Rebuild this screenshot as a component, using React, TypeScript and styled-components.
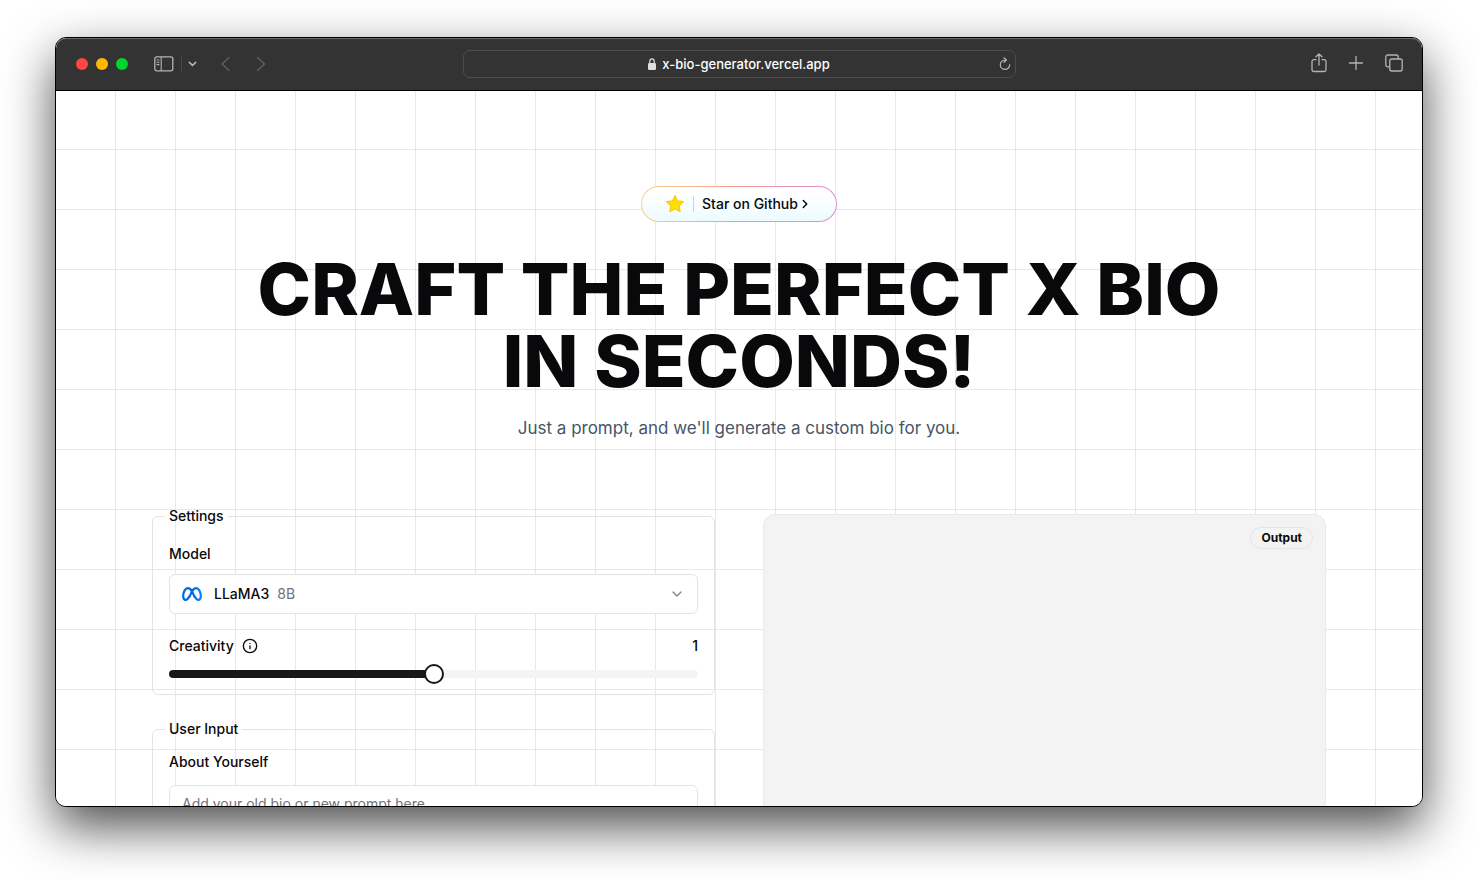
import React, { useState } from "react";
import styled, { createGlobalStyle } from "styled-components";
import { ChevronDown, ChevronRight, Info } from "lucide-react";

const GlobalStyle = createGlobalStyle`
  *, *::before, *::after { box-sizing: border-box; }
  body {
    margin: 0;
    background: #ffffff;
    color: #09090b;
    font-family: Inter, "Liberation Sans", sans-serif;
    font-size: 14px;
    line-height: 20px;
  }
  button, input, select, textarea { font: inherit; color: inherit; margin: 0; }
`;

const Desktop = styled.div`
  display: flex;
  height: 100vh;
  padding: 37px 55px 73px;
  overflow: hidden;
`;

const BrowserWindow = styled.div`
  flex: 1;
  min-width: 0;
  display: flex;
  flex-direction: column;
  overflow: hidden;
  border: 1px solid #000000;
  border-radius: 11px;
  background: #ffffff;
  box-shadow: 0 20px 50px rgba(0, 0, 0, 0.7);
`;

const TitleBar = styled.header`
  flex: none;
  display: grid;
  grid-template-columns: 1fr minmax(0, 553px) 1fr;
  align-items: center;
  height: 53px;
  padding: 0 18px;
  border-bottom: 1px solid #000000;
  border-radius: 10px 10px 0 0;
  background: #333333;
  box-shadow: inset 0 1px 0 #6a6a6a;
`;

const BarGroup = styled.div<{ $end?: boolean }>`
  display: flex;
  align-items: center;
  justify-content: ${(p) => (p.$end ? "flex-end" : "flex-start")};
  gap: ${(p) => (p.$end ? "18px" : "0")};
  padding-bottom: ${(p) => (p.$end ? "2px" : "0")};
`;

const Lights = styled.div`
  display: flex;
  gap: 8px;
  margin: 0 26px 0 2px;
`;

const Light = styled.button<{ $color: string }>`
  width: 12px;
  height: 12px;
  padding: 0;
  border: 0;
  border-radius: 50%;
  background: ${(p) => p.$color};
`;

const BarButton = styled.button<{ $dim?: boolean }>`
  display: flex;
  padding: 0;
  border: 0;
  background: none;
  color: ${(p) => (p.$dim ? "#5f5f5f" : "#b4b4b4")};
`;

const BarDivider = styled.span`
  width: 1px;
  height: 18px;
  margin: 0 6px 0 7px;
  background: #484848;
`;

const HistoryButtons = styled.div`
  display: flex;
  gap: 16px;
  margin-left: 18px;
`;

const AddressBar = styled.div`
  display: grid;
  grid-template-columns: 14px 1fr 14px;
  align-items: center;
  height: 28px;
  padding: 0 2px;
  border: 1px solid #4d4d4d;
  border-radius: 7px;
  color: #ffffff;
`;

const Address = styled.div`
  grid-column: 2;
  display: flex;
  justify-content: center;
  align-items: center;
  gap: 6px;
  font-size: 13px;
  font-weight: 500;
`;

const Page = styled.main`
  flex: 1;
  min-height: 0;
  overflow: hidden;
  padding: 95px 96px 0;
  background-color: #ffffff;
  background-image: linear-gradient(to right, transparent 59px, #e8e8ea 59px),
    linear-gradient(to bottom, transparent 59px, #e8e8ea 59px);
  background-size: 60px 60px;
  background-position: 0 -1px;
`;

const Hero = styled.section`
  display: flex;
  flex-direction: column;
  align-items: center;
  text-align: center;
`;

const StarLink = styled.a`
  display: flex;
  align-items: center;
  height: 36px;
  padding: 0 24px 0 23px;
  border: 1px solid transparent;
  border-radius: 18px;
  background: linear-gradient(to bottom, #ffffff 20%, #ecfbff) padding-box,
    linear-gradient(to right, #fbd38b, #efa08f 45%, #dd8fd3) border-box;
  color: #09090b;
  font-weight: 500;
  text-decoration: none;
`;

const StarDivider = styled.span`
  width: 1px;
  height: 16px;
  margin: 0 8px;
  background: #d1d5db;
`;

const Title = styled.h1`
  max-width: 1024px;
  margin: 31px 0 0;
  font-size: 72px;
  font-weight: 800;
  line-height: 72px;
  text-transform: uppercase;
`;

const Subtitle = styled.p`
  margin: 17px 0 0;
  color: #475569;
  font-size: 17px;
  line-height: 28px;
`;

const Columns = styled.div`
  display: grid;
  grid-template-columns: 1fr 1fr;
  gap: 48px;
  margin-top: 64px;
`;

const SettingsForm = styled.form`
  display: flex;
  flex-direction: column;
  gap: 24px;
  min-width: 0;
`;

const Group = styled.fieldset<{ $top: number }>`
  min-width: 0;
  margin: 0;
  padding: ${(p) => p.$top}px 16px 10px;
  border: 1px solid #e4e4e7;
  border-radius: 6px;
`;

const Legend = styled.legend`
  margin-left: -4px;
  padding: 0 4px;
  font-weight: 500;
`;

const FieldLabel = styled.label`
  display: block;
  font-weight: 500;
  line-height: 24px;
`;

const SelectFrame = styled.div`
  display: flex;
  align-items: center;
  height: 40px;
  margin: 8px 0 20px;
  padding: 0 12px;
  border: 1px solid #e4e4e7;
  border-radius: 6px;
  background: #ffffff;
`;

const ModelSelect = styled.select`
  appearance: none;
  field-sizing: content;
  margin-left: 12px;
  padding: 0;
  border: 0;
  background: none;
  font-weight: 500;
  outline: none;
`;

const ModelSize = styled.span`
  flex: 1;
  margin-left: 8px;
  color: #71717a;
`;

const SliderHead = styled.div`
  display: flex;
  align-items: center;
  gap: 8px;
`;

const SliderValue = styled.output`
  margin-left: auto;
  font-weight: 500;
`;

const Slider = styled.input`
  appearance: none;
  display: block;
  width: 100%;
  height: 20px;
  margin-top: 6px;
  background: none;
  outline: none;

  &::-webkit-slider-runnable-track {
    height: 8px;
    border-radius: 4px;
    background: linear-gradient(to right, #18181b var(--fill), #f4f4f5 var(--fill));
  }

  &::-webkit-slider-thumb {
    appearance: none;
    width: 20px;
    height: 20px;
    margin-top: -6px;
    border: 2px solid #18181b;
    border-radius: 50%;
    background: #ffffff;
  }
`;

const Prompt = styled.textarea`
  display: block;
  width: 100%;
  min-height: 100px;
  margin-top: 11px;
  padding: 8px 12px;
  border: 1px solid #e4e4e7;
  border-radius: 6px;
  background: #ffffff;
  resize: none;

  &::placeholder { color: #71717a; }
`;

const OutputPanel = styled.section`
  display: flex;
  justify-content: flex-end;
  align-items: flex-start;
  min-height: 480px;
  margin-top: 8px;
  padding: 12px;
  border: 1px solid #eaeaec;
  border-radius: 12px;
  background: #f3f3f3;
`;

const OutputTag = styled.h2`
  margin: 0;
  padding: 0 10px;
  border: 1px solid #e4e4e7;
  border-radius: 11px;
  font-size: 12px;
  font-weight: 700;
  line-height: 20px;
`;

const stroke = {
  fill: "none",
  stroke: "currentColor",
  strokeLinecap: "round" as const,
  strokeLinejoin: "round" as const,
};

const SidebarIcon = () => (
  <svg width="20" height="16" viewBox="0 0 20 16" {...stroke} strokeWidth="1.3">
    <rect x="0.8" y="0.8" width="18" height="14" rx="2" />
    <path d="M7.2 1v13.6M3 4h2M3 6.3h2M3 8.6h2" strokeWidth="1.1" />
  </svg>
);

const MenuChevron = () => (
  <svg width="9" height="6" viewBox="0 0 9 6" {...stroke} strokeWidth="1.6">
    <path d="M1.3 1.4 4.5 4.4 7.7 1.4" />
  </svg>
);

const BackIcon = () => (
  <svg width="20" height="16" viewBox="0 0 20 16" {...stroke} strokeWidth="1.5">
    <path d="M14 1.500 7 8l7 6.500" />
  </svg>
);

const ForwardIcon = () => (
  <svg width="20" height="16" viewBox="0 0 20 16" {...stroke} strokeWidth="1.5">
    <path d="m6.500 1.500 7 6.500-7 6.500" />
  </svg>
);

const LockIcon = () => (
  <svg width="8" height="12" viewBox="0 0 8 12">
    <rect x="0" y="5" width="8" height="7" rx="1.2" fill="#dedede" />
    <path d="M1.8 5.5V3.2a2.2 2.4 0 0 1 4.4 0v2.3" fill="none" stroke="#dedede" strokeWidth="1.2" />
  </svg>
);

const ReloadIcon = () => (
  <svg width="12" height="14" viewBox="0 0 12 14" {...stroke} strokeWidth="1.2">
    <path d="M6.5 3H6a4.7 4.7 0 1 0 4.7 4.7M5 .8 7.4 3 5 5.3" />
  </svg>
);

const ShareIcon = () => (
  <svg width="20" height="20" viewBox="0 0 20 20" {...stroke} strokeWidth="1.3">
    <path d="M8 6.600H5.800A1.800 1.800 0 0 0 4 8.400v8.300a1.800 1.800 0 0 0 1.800 1.800h10.400a1.800 1.800 0 0 0 1.800-1.800V8.400a1.800 1.800 0 0 0-1.800-1.800H14M11 12V1M8 3.800 11 .9l3 2.900" />
  </svg>
);

const PlusIcon = () => (
  <svg width="20" height="20" viewBox="0 0 20 20" {...stroke} strokeWidth="1.3">
    <path d="M10 3.500v13M3.500 10h13" />
  </svg>
);

const TabsIcon = () => (
  <svg width="20" height="20" viewBox="0 0 20 20" {...stroke} strokeWidth="1.3">
    <rect x="5.800" y="6" width="12.400" height="12" rx="2" />
    <path d="M5.600 13.800H3.800a2 2 0 0 1-2-2V4a2 2 0 0 1 2-2h8.400a2 2 0 0 1 2 2v1.800" />
  </svg>
);

const StarIcon = () => (
  <svg width="20" height="20" viewBox="0 0 20 20">
    <path
      d="M10 1.700 12.500 7l5.800.7-4.300 4 1.100 5.800L10 14.700l-5.100 2.800L6 11.700l-4.300-4L7.500 7z"
      fill="#fde000"
      stroke="#fccb0b"
      strokeWidth="1.300"
      strokeLinejoin="round"
    />
  </svg>
);

const MetaIcon = () => (
  <svg width="20" height="14" viewBox="0 0 20 14" fill="none" strokeWidth="2.200" strokeLinecap="round" strokeLinejoin="round">
    <defs>
      <linearGradient id="meta-blue" x1="0" x2="1">
        <stop offset="0" stopColor="#0668e1" />
        <stop offset="0.5" stopColor="#0064e0" />
        <stop offset="1" stopColor="#0a82fb" />
      </linearGradient>
    </defs>
    <path
      d="M10 4.300C8.700 2.100 7.500 1.200 5.900 1.200 3.200 1.200 1.200 5 1.200 9.200c0 2.300 1 3.600 2.500 3.600 1.600 0 2.600-1.200 4.300-4.200L10 4.300c1.300-2.100 2.500-3.100 4.100-3.100 2.700 0 4.700 3.800 4.700 8 0 2.300-1 3.600-2.500 3.600-1.600 0-2.600-1.200-4.300-4.200z"
      stroke="url(#meta-blue)"
    />
  </svg>
);

export default function App() {
  const [creativity, setCreativity] = useState(1);

  return (
    <>
      <GlobalStyle />
      <Desktop>
        <BrowserWindow>
          <TitleBar>
            <BarGroup>
              <Lights>
                <Light $color="#ff4642" aria-label="Close" />
                <Light $color="#ffb900" aria-label="Minimize" />
                <Light $color="#00d52c" aria-label="Zoom" />
              </Lights>
              <BarButton aria-label="Sidebar"><SidebarIcon /></BarButton>
              <BarDivider />
              <BarButton aria-label="Tab groups"><MenuChevron /></BarButton>
              <HistoryButtons>
                <BarButton $dim aria-label="Back"><BackIcon /></BarButton>
                <BarButton $dim aria-label="Forward"><ForwardIcon /></BarButton>
              </HistoryButtons>
            </BarGroup>
            <AddressBar>
              <Address>
                <LockIcon />
                x-bio-generator.vercel.app
              </Address>
              <BarButton aria-label="Reload"><ReloadIcon /></BarButton>
            </AddressBar>
            <BarGroup $end>
              <BarButton aria-label="Share"><ShareIcon /></BarButton>
              <BarButton aria-label="New tab"><PlusIcon /></BarButton>
              <BarButton aria-label="Tab overview"><TabsIcon /></BarButton>
            </BarGroup>
          </TitleBar>

          <Page>
            <Hero>
              <StarLink href="#github">
                <StarIcon />
                <StarDivider />
                Star on Github
                <ChevronRight size={14} strokeWidth={2.5} />
              </StarLink>
              <Title>Craft the perfect X bio in seconds!</Title>
              <Subtitle>Just a prompt, and we'll generate a custom bio for you.</Subtitle>
            </Hero>

            <Columns>
              <SettingsForm>
                <Group $top={16}>
                  <Legend>Settings</Legend>
                  <FieldLabel htmlFor="model">Model</FieldLabel>
                  <SelectFrame>
                    <MetaIcon />
                    <ModelSelect id="model" defaultValue="llama3">
                      <option value="llama3">LLaMA3</option>
                    </ModelSelect>
                    <ModelSize>8B</ModelSize>
                    <ChevronDown size={16} strokeWidth={2} color="#848486" />
                  </SelectFrame>
                  <SliderHead>
                    <FieldLabel htmlFor="creativity">Creativity</FieldLabel>
                    <Info size={16} strokeWidth={2} />
                    <SliderValue htmlFor="creativity">{creativity}</SliderValue>
                  </SliderHead>
                  <Slider
                    id="creativity"
                    type="range"
                    min={0}
                    max={2}
                    step={0.1}
                    value={creativity}
                    onChange={(e) => setCreativity(Number(e.target.value))}
                    style={{ "--fill": `${creativity * 50}%` } as React.CSSProperties}
                  />
                </Group>
                <Group $top={11}>
                  <Legend>User Input</Legend>
                  <FieldLabel htmlFor="about">About Yourself</FieldLabel>
                  <Prompt id="about" placeholder="Add your old bio or new prompt here" />
                </Group>
              </SettingsForm>
              <OutputPanel>
                <OutputTag>Output</OutputTag>
              </OutputPanel>
            </Columns>
          </Page>
        </BrowserWindow>
      </Desktop>
    </>
  );
}
